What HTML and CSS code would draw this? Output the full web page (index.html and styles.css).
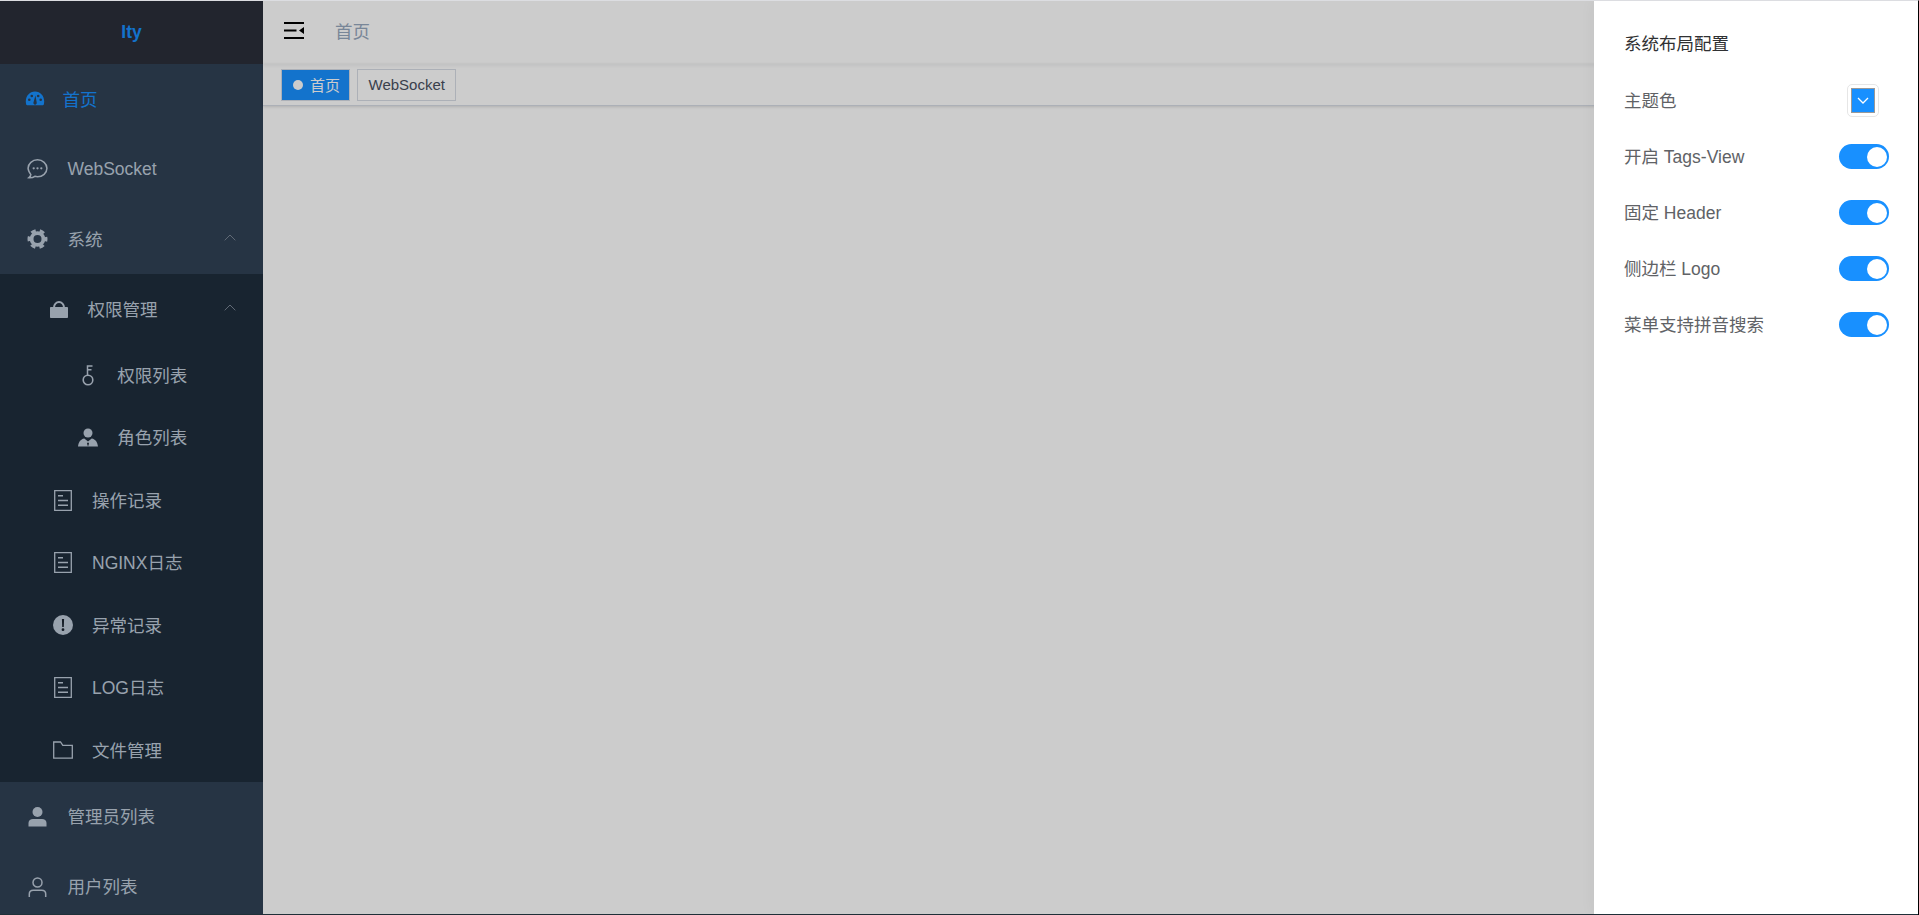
FILE: index.html
```html
<!DOCTYPE html>
<html lang="en">
<head>
    <meta charset="UTF-8">
    <meta name="viewport" content="width=device-width, initial-scale=1.0">
    <title>首页</title>
    <link rel="stylesheet" href="styles.css">
</head>
<body>
    <svg class="defs" width="0" height="0">
        <defs>
            <g id="doc-icon">
                <path fill="none" stroke="currentColor" stroke-width="1.300" d="M.7.700h16.600v19.600H.7z"/>
                <path fill="currentColor" d="M4 5h5v1.400H4zM4 9.800h10v1.400H4zM4 14.600h10V16H4z"/>
            </g>
        </defs>
    </svg>
    <div class="app">
        <aside class="sidebar">
            <div class="logo">Ity</div>
            <nav class="menu">
                <a class="menu-item active">
                    <svg class="icon" viewBox="0 0 20 20"><path fill="currentColor" fill-rule="evenodd" d="M10 2.500C4.600 2.500.8 6.900.8 12.400c0 1.300.2 2.500.5 3.400.1.300.4.500.8.500h15.800c.4 0 .7-.2.800-.5.3-.9.500-2.100.5-3.400C19.200 6.900 15.400 2.500 10 2.500zM4.300 12a1.300 1.300 0 1 1 0-2.600 1.300 1.300 0 0 1 0 2.600zm2.500-3.700a1.300 1.300 0 1 1 0-2.600 1.300 1.300 0 0 1 0 2.600zm4.600 6.700a1.700 1.700 0 0 1-3-1.300L10.400 6.500l1.300 7c.1.500 0 1-.3 1.500zm1.800-6.700a1.300 1.300 0 1 1 0-2.600 1.300 1.300 0 0 1 0 2.600zm2.500 3.700a1.300 1.300 0 1 1 0-2.600 1.300 1.300 0 0 1 0 2.600z"/></svg>
                    <span>首页</span>
                </a>
                <a class="menu-item">
                    <svg class="icon" viewBox="0 0 22 21"><path fill="none" stroke="currentColor" stroke-width="1.600" d="M11 .9c5.400 0 9.900 3.900 9.900 8.900s-4.500 8.800-9.900 8.800c-1 0-1.900-.1-2.800-.4-1.300 1-3.400 1.500-6.200 1.400 1.100-.9 1.800-2 2-3.200C2.300 13.900 1.100 12 1.100 9.800 1.100 4.800 5.600.9 11 .9z"/><circle cx="7" cy="9.800" r="1.200" fill="currentColor"/><circle cx="11" cy="9.800" r="1.200" fill="currentColor"/><circle cx="15" cy="9.800" r="1.200" fill="currentColor"/></svg>
                    <span class="latin">WebSocket</span>
                </a>
                <a class="menu-item">
                    <svg class="icon" viewBox="0 0 21 21"><circle cx="10.500" cy="10.500" r="6.200" fill="none" stroke="currentColor" stroke-width="4"/><circle cx="10.500" cy="10.500" r="9" fill="none" stroke="currentColor" stroke-width="3" stroke-dasharray="5 4.425" stroke-dashoffset="2.500"/></svg>
                    <span>系统</span>
                    <svg class="arrow" viewBox="0 0 12 7"><path fill="none" stroke="currentColor" d="M.7 6.300 6 1l5.300 5.300"/></svg>
                </a>
                <div class="submenu">
                    <a class="menu-item level-2">
                        <svg class="icon" viewBox="0 0 18 17"><path fill="currentColor" d="M3 6.500A6 6.500 0 0 1 15 6.500h-2A4 4.500 0 0 0 5 6.500zM1 6h16c.5 0 1 .4 1 1v9c0 .6-.5 1-1 1H1c-.5 0-1-.4-1-1V7c0-.6.5-1 1-1z"/></svg>
                        <span>权限管理</span>
                        <svg class="arrow" viewBox="0 0 12 7"><path fill="none" stroke="currentColor" d="M.7 6.300 6 1l5.300 5.300"/></svg>
                    </a>
                    <a class="menu-item level-3">
                        <svg class="icon" viewBox="0 0 14 21"><circle cx="7" cy="15" r="4.800" fill="none" stroke="currentColor" stroke-width="1.600"/><path fill="none" stroke="currentColor" stroke-width="1.500" d="M6.500 10V1h5M6.500 4.700h4"/></svg>
                        <span>权限列表</span>
                    </a>
                    <a class="menu-item level-3">
                        <svg class="icon" viewBox="0 0 20 20"><circle cx="10" cy="5.500" r="4.500" fill="currentColor"/><path fill="currentColor" d="M0 19c.5-4.500 2.500-7.300 6.300-8l3.700 3 3.700-3c3.800.7 5.800 3.500 6.300 8z"/><path fill="#19232f" d="m10 14.800 1 1.300-1 2.900-1-2.900z"/></svg>
                        <span>角色列表</span>
                    </a>
                    <a class="menu-item level-2b">
                        <svg class="icon doc" viewBox="-1 0 20 21"><use href="#doc-icon"/></svg>
                        <span>操作记录</span>
                    </a>
                    <a class="menu-item level-2b">
                        <svg class="icon doc" viewBox="-1 0 20 21"><use href="#doc-icon"/></svg>
                        <span>NGINX日志</span>
                    </a>
                    <a class="menu-item level-2b">
                        <svg class="icon" viewBox="0 0 20 20"><circle cx="10" cy="10" r="10" fill="currentColor"/><path fill="#19232f" d="M8.900 4h2.200l-.3 8H9.200zM10 13.300a1.400 1.400 0 1 1 0 2.800 1.400 1.400 0 0 1 0-2.800z"/></svg>
                        <span>异常记录</span>
                    </a>
                    <a class="menu-item level-2b">
                        <svg class="icon doc" viewBox="-1 0 20 21"><use href="#doc-icon"/></svg>
                        <span>LOG日志</span>
                    </a>
                    <a class="menu-item level-2b">
                        <svg class="icon" viewBox="0 0 20 18"><path fill="none" stroke="currentColor" stroke-width="1.300" d="M.7 1h6.800l2.300 3.300h9.500v12.900H.7z"/></svg>
                        <span>文件管理</span>
                    </a>
                </div>
                <a class="menu-item">
                    <svg class="icon" viewBox="-1.500 0 21 20"><circle cx="9" cy="5" r="5" fill="currentColor"/><path fill="currentColor" d="M0 19.500V16c0-2.500 2-4 4.500-4h9c2.500 0 4.500 1.500 4.500 4v3.500z"/></svg>
                    <span>管理员列表</span>
                </a>
                <a class="menu-item">
                    <svg class="icon" viewBox="-1.500 0 21 20"><circle cx="9" cy="5.500" r="4.500" fill="none" stroke="currentColor" stroke-width="1.500"/><path fill="none" stroke="currentColor" stroke-width="1.500" d="M.8 20v-3c0-2.300 1.700-3.800 4-3.800h8.400c2.300 0 4 1.500 4 3.800v3"/></svg>
                    <span>用户列表</span>
                </a>
            </nav>
        </aside>
        <main class="main">
            <header class="navbar">
                <svg class="hamburger" viewBox="0 0 20 17"><path fill="#000" d="M0 0h20v2H0zM0 7.500h12.500v2H0zM0 15h20v2H0zM20 5v7l-5-3.500z"/></svg>
                <span class="crumb">首页</span>
            </header>
            <div class="tags-view">
                <span class="tag current"><i class="dot"></i>首页</span>
                <span class="tag">WebSocket</span>
            </div>
        </main>
        <div class="overlay"></div>
        <section class="settings">
            <h3 class="settings-title">系统布局配置</h3>
            <div class="setting-row">
                <span>主题色</span>
                <span class="color-picker"><span class="color-box"><svg viewBox="0 0 12 7"><path fill="none" stroke="#fff" stroke-width="1.300" d="M1 1l5 5 5-5"/></svg></span></span>
            </div>
            <div class="setting-row"><span>开启 Tags-View</span><span class="switch"></span></div>
            <div class="setting-row"><span>固定 Header</span><span class="switch"></span></div>
            <div class="setting-row"><span>侧边栏 Logo</span><span class="switch"></span></div>
            <div class="setting-row"><span>菜单支持拼音搜索</span><span class="switch"></span></div>
        </section>
    </div>
</body>
</html>
```
FILE: styles.css
```css
html, body { margin: 0; height: 100%; overflow: hidden; }
body { font-family: "Liberation Sans", "Noto Sans CJK SC", sans-serif; background: #1f2f38; box-sizing: border-box; border-top: 1px solid #dcdde1; border-right: 1px solid #000; }
.app { position: relative; display: flex; height: 913px; background: #fff; overflow: hidden; }
.defs { position: absolute; }

/* sidebar */
.sidebar { width: 263px; flex-shrink: 0; background: #304156; font-size: 17.5px; }
.logo { height: 63px; line-height: 63px; text-align: center; background: #2b2f3a; color: #1890ff; font-weight: bold; font-size: 17.5px; }
.menu-item { display: flex; align-items: center; height: 70px; padding-left: 25px; color: #bfcbd9; box-sizing: border-box; position: relative; }
.menu-item span { margin-bottom: 2px; }
.menu-item span.latin { margin-bottom: 0; }
.menu-item.active { color: #1890ff; }
.icon { width: 21px; height: 20px; margin-left: 2px; margin-right: 19.500px; flex-shrink: 0; }
.menu-item.active .icon { width: 20px; margin-left: 0; margin-right: 17.500px; }
.arrow { position: absolute; right: 27px; top: 50%; width: 12px; height: 7px; margin-top: -5px; color: #7a8594; }
.submenu { background: #1f2d3d; }
.level-2 { padding-left: 50px; }
.level-2 .icon { width: 18px; height: 17px; margin-left: 0; margin-right: 19.500px; }
.level-3, .level-2b { height: 62.500px; }
.level-3 { padding-left: 78px; }
.level-2b { padding-left: 52.500px; }
.level-3 .icon { width: 20px; height: 21px; margin-left: 0; margin-right: 19.300px; }
.level-2b .icon { width: 20px; margin-left: 0; margin-right: 19.500px; }
.level-2b .icon.doc { height: 21px; }

/* main */
.main { flex: 1; background: #fff; min-width: 0; }
.navbar { display: flex; align-items: center; height: 63px; padding-bottom: 4px; box-sizing: border-box; box-shadow: 0 1px 4px rgba(0,21,41,.08); position: relative; }
.hamburger { width: 20px; height: 17px; margin-left: 21px; }
.crumb { margin-left: 31px; font-size: 17.5px; color: #97a8be; }
.tags-view { display: flex; align-items: center; height: 42px; padding-left: 18px; gap: 7px; background: #fff; border-bottom: 1px solid #d8dce5; box-shadow: 0 1px 3px rgba(0,0,0,.12), 0 0 3px rgba(0,0,0,.04); box-sizing: border-box; }
.tag { display: flex; align-items: center; height: 32px; padding: 0 10.500px; border: 1px solid #d8dce5; color: #495060; font-size: 15px; box-sizing: border-box; background: #fff; }
.tag.current { background: #1890ff; color: #fff; padding: 0 9px 0 11px; }
.dot { width: 10px; height: 10px; border-radius: 50%; background: #fff; margin-right: 7px; }

/* overlay and settings panel */
.overlay { position: absolute; inset: 0; background: rgba(0,0,0,.2); }
.settings { position: absolute; top: 0; right: 0; bottom: 0; width: 324px; padding: 32px 29px 0 30px; box-sizing: border-box; background: #fff; box-shadow: 0 0 15px rgba(0,0,0,.05); color: #606266; font-size: 17.5px; }
.settings-title { margin: 0 0 17.500px; font-size: 17.5px; font-weight: normal; line-height: 22px; color: #303133; }
.setting-row { display: flex; align-items: center; justify-content: space-between; height: 56px; }
.setting-row > span:first-child { margin-bottom: 2px; }
.color-picker { display: flex; align-items: center; justify-content: center; width: 32px; height: 33px; margin-right: 10px; border: 1px solid #e6e6e6; border-radius: 5px; box-sizing: border-box; }
.color-box { display: flex; align-items: center; justify-content: center; width: 24px; height: 25px; background: #1890ff; border: 1px solid #999; box-sizing: border-box; }
.color-box svg { width: 12px; height: 7px; }
.switch { position: relative; width: 50px; height: 25px; border-radius: 13px; background: #1890ff; }
.switch::after { content: ""; position: absolute; top: 2.500px; right: 2.500px; width: 20px; height: 20px; border-radius: 50%; background: #fff; }
```
